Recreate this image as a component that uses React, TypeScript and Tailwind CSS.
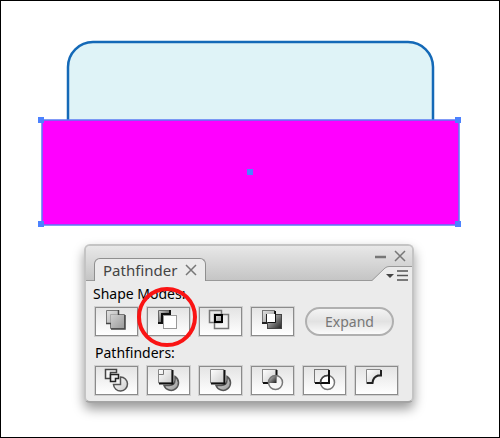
import React from 'react';

interface ToolIcon {
  name: string;
  drawing: React.ReactNode;
}

const shapeModes: ToolIcon[] = [
  {
    name: 'Add to shape area',
    drawing: (
      <>
        <path d="M10.5 2.5H22.5V6.5H28.5V20.5H14.5V15.5H10.5Z" fill="url(#mid)" stroke="#777" />
        <path d="M14.5 15V6.5H22.5" fill="none" stroke="#aaa" />
        <path d="M15 21H29V7" fill="none" stroke="#444" strokeWidth="1.5" />
        <path d="M10 15.5H15M22.5 2V7" fill="none" stroke="#444" strokeWidth="1.5" />
      </>
    )
  },
  {
    name: 'Subtract from shape area',
    drawing: (
      <>
        <path d="M10.5 2.5H21.5V6.5H14.5V14.5H10.5Z" fill="url(#dark)" stroke="#666" />
        <path d="M22 2V6H14V15H10" fill="none" stroke="#111" strokeWidth="2" />
        <rect x="15.5" y="7.5" width="13" height="13" fill="#fff" stroke="#999" />
      </>
    )
  },
  {
    name: 'Intersect shape areas',
    drawing: (
      <>
        <rect x="9.5" y="2.5" width="12" height="12" fill="none" stroke="#777" strokeWidth="1.5" />
        <rect x="14.5" y="6.5" width="14" height="14" fill="none" stroke="#777" strokeWidth="1.5" />
        <rect x="15" y="7" width="7" height="7" fill="url(#mid)" stroke="#000" strokeWidth="2" />
      </>
    )
  },
  {
    name: 'Exclude overlapping shape areas',
    drawing: (
      <>
        <rect x="10.5" y="2.5" width="12" height="12" fill="url(#mid)" stroke="#777" />
        <path d="M23 3V7H15V15H10" fill="none" stroke="#222" strokeWidth="2" />
        <rect x="15.5" y="6.5" width="14" height="14" fill="url(#dark)" stroke="#444" />
        <rect x="15" y="6" width="8" height="8" fill="#fff" />
        <path d="M23.5 3V14.5H16" fill="none" stroke="#111" />
      </>
    )
  },
];

const pathfinders: ToolIcon[] = [
  {
    name: 'Divide',
    drawing: (
      <>
        <path d="M17.5 17.5H24.5V10A7 7 0 1 1 17.5 17.5Z" fill="url(#light)" stroke="#555" strokeWidth="1.5" />
        <path d="M9.5 2.5H20.5V5.5H14.5V11.5H9.5Z" fill="#f4f4f4" stroke="#444" strokeWidth="1.5" />
        <path d="M14.5 7.5H22.5V11.5H19.5V14.5H14.5Z" fill="#eee" stroke="#222" strokeWidth="1.5" />
      </>
    )
  },
  {
    name: 'Trim',
    drawing: (
      <>
        <path d="M27 9.5A7.5 7.5 0 1 1 16 18.5H21Q27 18 27 13Z" fill="url(#mid)" stroke="#555" strokeWidth="1.5" />
        <path d="M10.5 2.5H24V16H10.5Z" fill="url(#light)" stroke="#888" />
        <path d="M24.5 3V16.5H11" fill="none" stroke="#111" strokeWidth="2" />
        <path d="M15.5 3V7.5H11" fill="none" stroke="#777" />
      </>
    )
  },
  {
    name: 'Merge',
    drawing: (
      <>
        <path d="M27 9.5A7.5 7.5 0 1 1 16 18.5H21Q27 18 27 13Z" fill="url(#mid)" stroke="#555" strokeWidth="1.5" />
        <path d="M10.5 2.5H24V16H10.5Z" fill="url(#light)" stroke="#888" />
        <path d="M24.5 3V16.5H11" fill="none" stroke="#111" strokeWidth="2" />
      </>
    )
  },
  {
    name: 'Crop',
    drawing: (
      <>
        <rect x="10.5" y="2.5" width="14" height="13" fill="url(#light)" stroke="#888" />
        <path d="M16.5 16A7 7 0 0 1 24 8.5V16Z" fill="url(#dark)" />
        <path d="M24.5 3V9M11 16H17" stroke="#111" strokeWidth="2" />
        <circle cx="23.5" cy="15.5" r="7" fill="none" stroke="#777" strokeWidth="1.5" />
      </>
    )
  },
  {
    name: 'Outline',
    drawing: (
      <>
        <circle cx="23.5" cy="15.5" r="7" fill="#fff" stroke="#777" strokeWidth="1.5" />
        <rect x="10.5" y="2.5" width="14" height="13" fill="none" stroke="#777" />
        <path d="M25 3V16H11" fill="none" stroke="#111" strokeWidth="2" />
        <path d="M16.5 16A7 7 0 0 1 24 8.5" fill="none" stroke="#444" strokeWidth="1.5" />
      </>
    )
  },
  {
    name: 'Minus back',
    drawing: (
      <>
        <path d="M10.5 2.5H24.5V8.5Q17 9 16.5 16.5H10.5Z" fill="url(#light)" stroke="#888" />
        <path d="M25 3V8.5H22Q17 10 16.5 16H11" fill="none" stroke="#222" strokeWidth="2" />
      </>
    )
  }
];

const ToolButton: React.FC<{ icon: ToolIcon; highlighted?: boolean }> = ({ icon, highlighted }) => (
  <div className="relative">
    <button
      type="button"
      aria-label={icon.name}
      className="block border border-[#8b8b8b] bg-gradient-to-b from-[#e4e4e4] to-white outline outline-[#d0d0d0]"
    >
      <svg width="41" height="27" viewBox="0 0 41 27">{icon.drawing}</svg>
    </button>
    {highlighted && (
      <span className="pointer-events-none absolute -left-2.5 -top-5 size-15 rounded-full border-4 border-[#fa1414]" />
    )}
  </div>
);

const Artwork: React.FC = () => (
  <svg className="block shrink-0" width="424" height="188" viewBox="38 40 424 188">
    <path d="M68 130V67A25 25 0 0 1 93 42H408A25 25 0 0 1 433 67V130Z" fill="#dff3f7" stroke="#1469b7" strokeWidth="2.5" />
    <rect x="42" y="120" width="417" height="105" fill="#ff00ff" stroke="#5a7bf5" strokeWidth="1.5" />
    <g fill="#4c82ff">
      <rect x="38" y="117" width="6" height="6" />
      <rect x="455" y="117" width="6" height="6" />
      <rect x="38" y="221" width="6" height="6" />
      <rect x="455" y="221" width="6" height="6" />
      <rect x="247" y="169" width="6" height="6" />
    </g>
  </svg>
);

export default function App() {
  return (
    <main className="flex min-h-screen flex-col items-center border border-black bg-white pt-[39px] font-['Noto_Sans','Open_Sans',sans-serif] text-black">
      {/* Gradients shared by the tool icons */}
      <svg width="0" height="0" className="absolute">
        <defs>
          <linearGradient id="light" x1="0" y1="0" x2="1" y2="1">
            <stop offset="0" stopColor="#fff" />
            <stop offset="1" stopColor="#ccc" />
          </linearGradient>
          <linearGradient id="mid" x1="0" y1="0" x2="1" y2="1">
            <stop offset="0" stopColor="#e2e2e2" />
            <stop offset="1" stopColor="#999" />
          </linearGradient>
          <linearGradient id="dark" x1="0" y1="0" x2="1" y2="1">
            <stop offset="0" stopColor="#d8d8d8" />
            <stop offset="1" stopColor="#222" />
          </linearGradient>
        </defs>
      </svg>

      <Artwork />

      <section className="mr-0.5 mt-4 w-[330px] rounded-md border-2 border-[#c4c4c4] border-b-[#a4a4a4] bg-[#ebebeb] shadow-[0_6px_12px_rgba(0,0,0,0.4)]">
        {/* Title bar */}
        <header className="flex items-end justify-between rounded-t bg-gradient-to-b from-[#e8e8e8] to-[#c4c4c4]">
          <div className="flex flex-1 items-end">
            <div className="h-px w-2 bg-[#999]" />
            <div className="flex h-[23px] items-center gap-2 rounded-t-md border border-b-0 border-[#8f8f8f] bg-[#ebebeb] px-2">
              <h1 className="text-[15px] leading-5 text-[#444]">Pathfinder</h1>
              <button type="button" aria-label="Close tab">
                <svg className="block" width="12" height="12" viewBox="0 0 12 12">
                  <path d="M1 1L11 11M11 1L1 11" stroke="#777" strokeWidth="1.5" />
                </svg>
              </button>
            </div>
            <div className="h-px flex-1 bg-[#999]" />
          </div>
          <div className="w-10">
            <div className="flex h-5 items-center justify-end gap-2 pr-1.5">
              <button type="button" aria-label="Minimize">
                <svg className="block" width="11" height="12" viewBox="0 0 11 12">
                  <path d="M0 7H11" stroke="#777" strokeWidth="2.5" />
                </svg>
              </button>
              <button type="button" aria-label="Close panel">
                <svg className="block" width="12" height="12" viewBox="0 0 12 12">
                  <path d="M1 1L11 11M11 1L1 11" stroke="#777" strokeWidth="1.5" />
                </svg>
              </button>
            </div>
            <button type="button" aria-label="Panel menu" className="block">
              <svg className="block" width="40" height="15" viewBox="0 0 40 15">
                <path d="M0 15L13 2Q15 .5 17 .5H40V15Z" fill="#ebebeb" />
                <path d="M0 14.5L13 2Q15 .5 17 .5H40" fill="none" stroke="#999" />
                <path d="M14 8H22L18 12Z" fill="#444" />
                <path d="M25 5H36M25 9.5H36M25 14H36" stroke="#555" strokeWidth="1.5" />
              </svg>
            </button>
          </div>
        </header>

        <div className="pb-1.5 pl-[7px] pr-2 pt-1">
          <h2 className="text-sm leading-[18px]">Shape Modes:</h2>
          <div className="flex items-center justify-between pl-0.5 pr-2.5 pt-1">
            <div className="flex gap-[9px]">
              {shapeModes.map((icon, index) => (
                <ToolButton key={icon.name} icon={icon} highlighted={index === 1} />
              ))}
            </div>
            <button
              type="button"
              className="h-[29px] w-[89px] rounded-full border-2 border-[#b0b0b0] bg-gradient-to-b from-[#f4f4f4] via-[#e2e2e2] to-[#fbfbfb] text-sm leading-5 text-[#777]"
            >
              Expand
            </button>
          </div>
          <h2 className="pl-0.5 pt-2 text-sm leading-[18px]">Pathfinders:</h2>
          <div className="flex gap-[9px] pl-0.5 pt-1">
            {pathfinders.map((icon) => (
              <ToolButton key={icon.name} icon={icon} />
            ))}
          </div>
        </div>
      </section>
    </main>
  );
}
